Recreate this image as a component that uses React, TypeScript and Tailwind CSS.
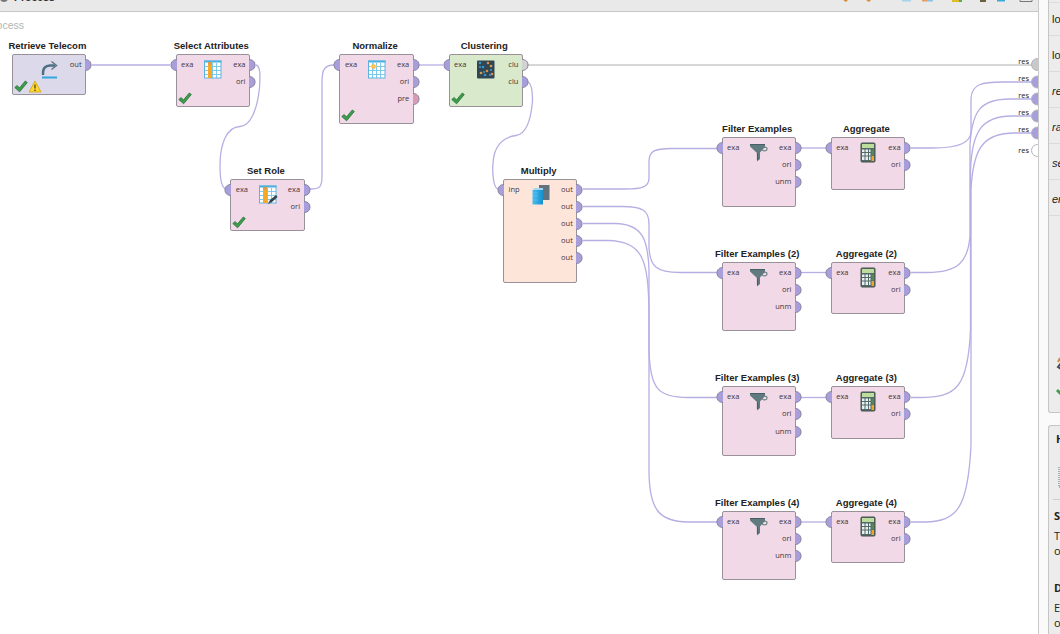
import { useId } from "react";

type Port = { label: string; tone?: "blue" | "gray" | "rose" };

type Operator = {
  title: string;
  icon: string;
  color: string;
  x: number;
  y: number;
  height: number;
  inputs: Port[];
  outputs: Port[];
  ok?: boolean;
  warning?: boolean;
};

const PINK = "bg-[#f1d9e8]";

const exa: Port = { label: "exa" };
const ori: Port = { label: "ori" };
const out: Port = { label: "out" };

const branches = ["", " (2)", " (3)", " (4)"];

const operators: Operator[] = [
  { title: "Retrieve Telecom", icon: "retrieve", color: "bg-[#dcd9ea]", x: 11.7, y: 54, height: 41, inputs: [], outputs: [out], ok: true, warning: true },
  { title: "Select Attributes", icon: "columns", color: PINK, x: 175.6, y: 54, height: 52.5, inputs: [exa], outputs: [exa, ori], ok: true },
  { title: "Set Role", icon: "role", color: PINK, x: 230.2, y: 178.5, height: 52.5, inputs: [exa], outputs: [exa, ori], ok: true },
  { title: "Normalize", icon: "normalize", color: PINK, x: 339.4, y: 54, height: 69.5, inputs: [exa], outputs: [exa, ori, { label: "pre", tone: "rose" }], ok: true },
  { title: "Clustering", icon: "cluster", color: "bg-[#d8eacb]", x: 448.5, y: 54, height: 52.5, inputs: [exa], outputs: [{ label: "clu", tone: "gray" }, { label: "clu" }], ok: true },
  { title: "Multiply", icon: "multiply", color: "bg-[#fee5d9]", x: 503, y: 178.5, height: 104, inputs: [{ label: "inp" }], outputs: [out, out, out, out, out] },
  ...branches.flatMap((suffix, i): Operator[] => {
    const y = [137, 261.6, 386.2, 510.9][i];
    return [
      { title: "Filter Examples" + suffix, icon: "filter", color: PINK, x: 721.5, y, height: 69.5, inputs: [exa], outputs: [exa, ori, { label: "unm" }] },
      { title: "Aggregate" + suffix, icon: "calculator", color: PINK, x: 830.7, y, height: 52.5, inputs: [exa], outputs: [exa, ori] },
    ];
  }),
];

const wires = [
  "M92 65H170",
  "M256 65C261 66 260 78 259.500 88C257 111 250 126 240 126.500C226 127 220 145 220 166C220 180 222 188 226 189",
  "M310 189C320 189 322 187 322 176V82C322 69 325 65 334 65",
  "M419 65H443",
  "M528 82C532 84 532.500 93 532.500 101C531 119 527 134 516 135.500C503 137 494 146 493 163C492 176 494 188 498 189",
  "M583 189H625C642 189 649 187 649 178V162C649 151 654 148.500 672 148.500H717",
  "M583 206.500H622C642 206.500 649 210 649 224V248C650 266 656 272.500 680 272.500H717",
  "M583 223.500H615C643 224 648 240 649 270V350C650 389 658 397.500 688 397.500H717",
  "M583 240.500H608C644 241 648 262 649 310V470C649 508 658 522 688 522H717",
  "M801 148H826",
  "M801 272.500H826",
  "M801 397.500H826",
  "M801 522H826",
  "M911 148H932C961 148 970 142 971 132V98C972 84 982 82 1003 82H1032",
  "M911 272.500H927C958 272.500 968 262 970 236V145C972 110 981 99 1010 99H1032",
  "M911 397.500H920C956 397.500 968 388 970.500 330V170C972 131 982 116 1012 116H1032",
  "M911 522H925C957 521 968 509 971 445V190C973 148 983 133 1015 133H1032",
];

const results = [
  { y: 64.5, labelY: 61, fill: "#c9c9c9" },
  { y: 82, labelY: 78, fill: "#a79edb" },
  { y: 99, labelY: 95, fill: "#a79edb" },
  { y: 116, labelY: 112, fill: "#a79edb" },
  { y: 133, labelY: 129, fill: "#a79edb" },
  { y: 150.5, labelY: 150, fill: "#ffffff" },
];

const tones = { blue: "#a79edb", gray: "#d2d2d2", rose: "#d79bb5" };

function PortDot({ side, tone = "blue" }: { side: "left" | "right"; tone?: Port["tone"] }) {
  return (
    <svg width="7" height="12" viewBox="0 0 7 12" className="block shrink-0">
      <path
        d={side === "left" ? "M7 .5C3 .5 1 3 1 6S3 11.500 7 11.500" : "M0 .5C4 .5 6 3 6 6S4 11.500 0 11.500"}
        fill={tones[tone]}
        stroke="#88839b"
      />
    </svg>
  );
}

function Check() {
  return (
    <svg width="14" height="13" viewBox="0 0 14 13">
      <path d="M.8 7.500L3.200 5.500L5.400 8L11.300 1L13.300 2.500L5.600 11.800Z" fill="#3f9c4b" stroke="#23713a" strokeWidth=".8" />
    </svg>
  );
}

function Warning() {
  return (
    <svg width="14" height="13" viewBox="0 0 14 13">
      <path d="M7 1L13 12H1Z" fill="#ffd92e" stroke="#d9ae24" strokeLinejoin="round" />
      <path d="M7 4.500V8.500M7 9.500V11" stroke="#4b4420" strokeWidth="1.300" />
    </svg>
  );
}

function Grid() {
  return (
    <>
      <rect x="1.500" y="1.500" width="16.500" height="17.500" fill="#fff" />
      <path d="M5.500 4V19M9.500 4V19M13.500 4V19M2 7.500H18M2 11.500H18M2 15.500H18" stroke="#70c3e9" strokeWidth=".9" />
      <path d="M1 2.500H18.500" stroke="#45a9dc" strokeWidth="2" />
      <rect x="1.500" y="2" width="16.500" height="17" fill="none" stroke="#5bb5e0" />
    </>
  );
}

function Glyph({ name }: { name: string }) {
  const id = useId();
  return (
    <svg width="20" height="21" viewBox="0 0 20 21" className="block">
      {name === "retrieve" && (
        <>
          <path d="M4 16C3.500 9 6.500 6.500 11 6.500H16" fill="none" stroke="#4c6f84" strokeWidth="2.400" />
          <path d="M12.500 2.500L17.500 6.500L12.500 10.500" fill="none" stroke="#607887" strokeWidth="1.500" />
          <path d="M3 18.500H18" stroke="#32a7e0" strokeWidth="2" />
        </>
      )}
      {(name === "columns" || name === "role") && (
        <>
          <Grid />
          <path d="M5 3H9V19H5Z" fill="#f8a824" />
          <path d="M5 3H9V5.500H5Z" fill="#d89b50" />
        </>
      )}
      {name === "role" && (
        <>
          <path d="M10 20L12 16L18 11L19.500 13L14 18Z" fill="#35424c" />
          <path d="M10 20L12 18.800" stroke="#73818b" />
        </>
      )}
      {name === "normalize" && (
        <>
          <Grid />
          <path d="M4.500 5.500H8.500V9.500H4.500Z" fill="#ffb43e" />
          <path d="M6.500 4V11M3 7.500H10" stroke="#ffc869" strokeWidth="1" />
        </>
      )}
      {name === "cluster" && (
        <>
          <rect x="1" y="1.500" width="17.500" height="18" rx="1" fill="#314653" />
          {[[4, 4], [12, 4], [15, 7], [7, 8], [11, 12], [5, 14], [9, 16], [16, 15]].map(([x, y], i) => (
            <circle key={i} cx={x} cy={y} r="1.300" fill={i % 3 === 1 ? "#df8b45" : i % 3 ? "#d1a04b" : "#3795c7"} />
          ))}
          <path d="M3 8H5M13 16H15M14 11H16M7 13H9" stroke="#409bc9" strokeWidth="1.500" />
        </>
      )}
      {name === "multiply" && (
        <>
          <defs>
            <linearGradient id={id} x1="0" x2="1">
              <stop stopColor="#48bdf0" />
              <stop offset="1" stopColor="#168fcd" />
            </linearGradient>
          </defs>
          <path d="M8 1H18.500V16H8Z" fill="#63737e" />
          <path d="M1.500 6H12V20.500H1.500Z" fill={"url(#" + id + ")"} />
          <path d="M1.500 6L3.500 4H12V6H1.500Z" fill="#a0d9ef" />
          <path d="M2 9H7M2 12H7M2 16H7" stroke="#65c9f1" strokeWidth=".7" />
        </>
      )}
      {name === "filter" && (
        <>
          <ellipse cx="15.500" cy="7" rx="2.500" ry="1.800" fill="none" stroke="#78888d" strokeWidth="1.200" />
          <path d="M1 2.500H16V5L11 10.500V17L8 19.500V11L1 4.500Z" fill="#607b80" />
          <path d="M1 2.500H16M8.500 11V18" stroke="#465f65" strokeWidth="1.200" />
        </>
      )}
      {name === "calculator" && (
        <>
          <rect x="3" y="1" width="14" height="19" rx="1" fill="#526a69" stroke="#46534c" />
          <path d="M4 2H16V6H4Z" fill="#bddd9c" />
          <path d="M4 7.500H6.500V10H4ZM7.500 7.500H10V10H7.500ZM4 11H6.500V13.500H4ZM7.500 11H10V13.500H7.500ZM4 14.500H6.500V18H4ZM7.500 14.500H10V18H7.500ZM11 7.500H12.500V10H11ZM11 11H12.500V13.500H11ZM11 14.500H12.500V18H11Z" fill="#e8f1ef" />
          <path d="M13.500 7.500H16V13.500H13.500Z" fill="#568954" />
          <path d="M13.500 14H16V19H13.500Z" fill="#f0a32d" />
        </>
      )}
    </svg>
  );
}

function OperatorBox({ op }: { op: Operator }) {
  return (
    <div className="absolute w-[74.4px]" style={{ left: op.x, top: op.y - 15, height: op.height + 15 }}>
      <div className="-ml-[3px] flex h-[15px] justify-center whitespace-nowrap text-[9.5px] leading-[13px] font-bold text-[#222]">{op.title}</div>
      <div className={`relative rounded-[2px] border border-[#98919a] ${op.color}`} style={{ height: op.height }}>
        <div className="absolute -left-[7px] top-1">
          {op.inputs.map((port, i) => (
            <div key={i} className="flex h-[17.2px] items-start">
              <PortDot side="left" tone={port.tone} />
              <span className="ml-[4.5px] font-['Open_Sans',sans-serif] text-[7.5px] leading-[11px] font-medium text-[#43353e]">{port.label}</span>
            </div>
          ))}
        </div>
        <div className="absolute -right-[7px] top-1">
          {op.outputs.map((port, i) => (
            <div key={i} className="flex h-[17.2px] items-start justify-end">
              <span className="mr-[3.5px] font-['Open_Sans',sans-serif] text-[7.5px] leading-[11px] font-medium text-[#43353e]">{port.label}</span>
              <PortDot side="right" tone={port.tone} />
            </div>
          ))}
        </div>
        <div className="absolute left-[26.5px] top-[4px]"><Glyph name={op.icon} /></div>
        <div className="absolute bottom-px left-px flex">
          {op.ok && <Check />}
          {op.warning && <Warning />}
        </div>
      </div>
    </div>
  );
}

function ParameterPanel() {
  const rows = ["lo", "lo", "re", "ra", "se", "en"];
  return (
    <section className="h-[413px] shrink-0 overflow-hidden rounded-bl-[3px] border-b border-l border-[#c5c5c5] bg-[#ececec]">
      <div className="h-[3px] border-b border-[#dcdce4]" />
      <div className="h-[33px] border-b border-[#dadada] pl-[3px] pt-[9px] text-[11px] leading-[14px]">{rows[0]}</div>
      {rows.slice(1).map((row, i) => (
        <div key={i} className={`flex h-9 items-center border-b border-[#dadada] pl-[3px] pt-[4px] text-[11px] ${i > 0 ? "italic" : ""}`}>
          {row}
        </div>
      ))}
      <svg width="12" height="50" viewBox="0 0 12 50" className="mt-[138px]">
        <path d="M11 4L9 8" stroke="#c78e47" strokeWidth="2" />
        <path d="M12 9L9 13L12 15" fill="none" stroke="#424c56" strokeWidth="2" />
        <path d="M7 37L9 35L12 38V42Z" fill="#3f9c4b" />
      </svg>
    </section>
  );
}

function HelpPanel() {
  return (
    <section className="mt-3 flex-1 overflow-hidden rounded-tl-[3px] border-l border-t border-[#c5c5c5] bg-[#ececec] font-['Open_Sans',sans-serif] text-[11px]">
      <div className="h-[40px] pl-[7px] pt-[5px] font-bold">Help</div>
      <div className="ml-1 h-[34px] border-b border-[#cfcfcf] pl-1">
        <svg width="12" height="24" viewBox="0 0 12 24">
          <path d="M2 1V21M2 21H12" stroke="#5e7480" strokeDasharray="1 1" />
          <path d="M3 9H12V20H3Z" fill="#8dcce0" />
        </svg>
      </div>
      <div className="pl-[5px] pt-[8px] leading-[15px]">
        <div className="font-bold">Sy</div>
        <div className="mt-[5px]">Th</div>
        <div>of</div>
        <div className="mt-[22px] font-bold">De</div>
        <div className="mt-[5px]">Ex</div>
        <div>of</div>
      </div>
    </section>
  );
}

export default function App() {
  return (
    <main className="flex h-[634px] w-[1060px] overflow-hidden bg-[#fafafa] font-['Liberation_Sans',Arial,sans-serif] text-[#222]">
      <section className="flex w-[1039px] shrink-0 flex-col border-r border-[#c9c9c9] bg-white">
        <header className="flex h-3 shrink-0 justify-between overflow-hidden border-b border-[#c8c8c8] bg-[#e9e9e9]">
          <div className="flex">
            <span className="-mt-2 h-[10px] w-2 rounded-full bg-[#777]" />
            <span className="-mt-[10px] ml-1.5 text-[10.5px] leading-[14px] font-bold text-[#333]">Process</span>
          </div>
          <svg width="200" height="4" viewBox="-1 0 200 4">
            <path d="M4 0H9L7 2ZM27 0H32L30 2Z" fill="#d98936" />
            <path d="M63 0H72V1.500H63Z" fill="#a8d4e9" />
            <path d="M83 0H88V1.500H83Z" fill="#e79b65" />
            <path d="M88 0H94V1.500H88Z" fill="#8ac3e3" />
            <path d="M113 0H120V2H113Z" fill="#ddbc25" />
            <path d="M120 0H123V2H120Z" fill="#5faa59" />
            <path d="M141 0H147V2H141Z" fill="#67613d" />
            <path d="M158 0H166V1.500H158Z" fill="#3ba9d9" />
            <path d="M181 0V1.500H193V0" fill="none" stroke="#777" />
          </svg>
        </header>
        <div className="relative flex-1 overflow-hidden">
          <div className="absolute -top-3 left-0 h-[634px] w-[1038px]">
            <div className="absolute right-[1014px] top-[19px] text-[10.5px] leading-[13px] text-[#b4b4b4]">Process</div>
            <svg width="1038" height="634" viewBox="0 0 1038 634" className="absolute inset-0" fill="none">
              <path d="M528 65H1032" stroke="#c9c9c9" strokeWidth="1.300" />
              {wires.map((d) => <path key={d} d={d} stroke="#b5afe3" strokeWidth="1.300" />)}
              {results.map((r) => <circle key={r.y} cx="1037.500" cy={r.y} r="6" fill={r.fill} stroke="#b5b3bd" />)}
            </svg>
            {operators.map((op) => <OperatorBox key={op.title} op={op} />)}
            {results.map((r) => (
              <span key={r.y} className="absolute right-[9px] font-['Open_Sans',sans-serif] text-[7.5px] leading-[10px] font-medium" style={{ top: r.labelY - 5 }}>res</span>
            ))}
          </div>
        </div>
      </section>
      <aside className="ml-[9px] flex flex-1 flex-col overflow-hidden">
        <ParameterPanel />
        <HelpPanel />
      </aside>
    </main>
  );
}
